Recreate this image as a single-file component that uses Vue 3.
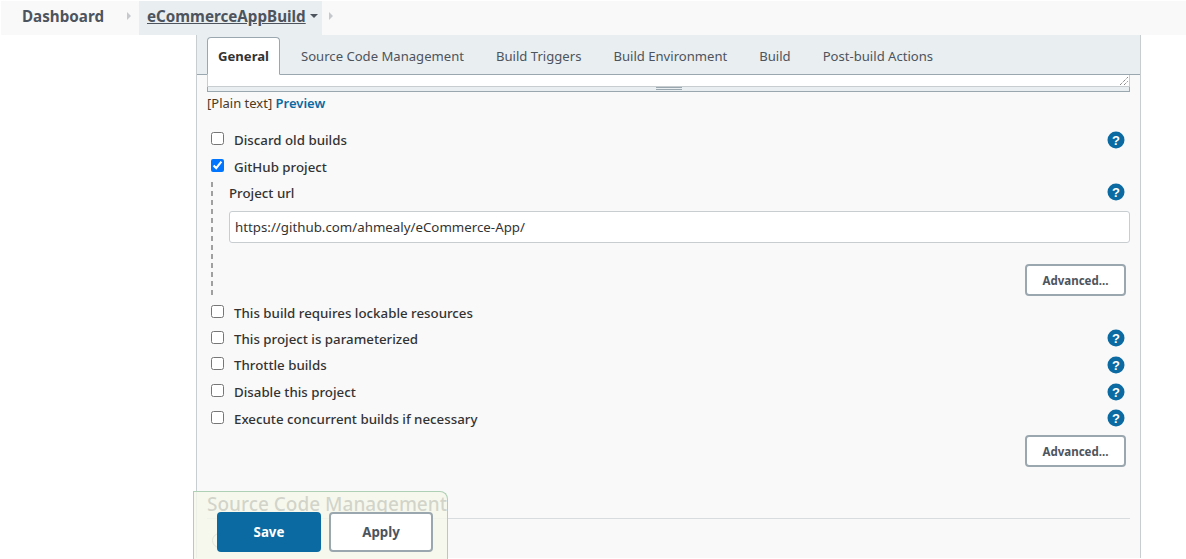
<template>
  <div class="page">
    <nav class="crumbs">
      <a class="crumb">Dashboard</a>
      <span class="sep"></span>
      <a class="crumb current">eCommerceAppBuild<span class="caret"></span></a>
      <span class="sep second"></span>
    </nav>

    <main class="panel">
      <div class="tabs">
        <span
          v-for="(tab, i) in tabs"
          :key="tab"
          class="tab"
          :class="{ active: i === 0 }"
        >{{ tab }}</span>
      </div>

      <div class="body">
        <div class="textarea-end">
          <svg class="resize" width="10" height="10" viewBox="0 0 10 10">
            <path d="M1 9 9 1M5 9 9 5" stroke="#555" stroke-width="1" stroke-dasharray="1 1" fill="none" />
          </svg>
        </div>
        <div class="grip"><span></span></div>
        <div class="format">[Plain text] <a>Preview</a></div>

        <div class="row first">
          <label class="check"><input type="checkbox" />Discard old builds</label>
          <svg class="help" viewBox="0 0 18 18"><circle cx="9" cy="9" r="8.5" /><text x="9" y="13.5">?</text></svg>
        </div>
        <div class="row">
          <label class="check"><input type="checkbox" checked />GitHub project</label>
        </div>

        <div class="nested">
          <div class="row url-label">
            <span>Project url</span>
            <svg class="help" viewBox="0 0 18 18"><circle cx="9" cy="9" r="8.5" /><text x="9" y="13.5">?</text></svg>
          </div>
          <input class="url" type="text" value="https://github.com/ahmealy/eCommerce-App/" />
          <div class="adv-row"><button class="btn adv">Advanced...</button></div>
        </div>

        <div class="row lock">
          <label class="check"><input type="checkbox" />This build requires lockable resources</label>
        </div>
        <div v-for="item in options" :key="item" class="row">
          <label class="check"><input type="checkbox" />{{ item }}</label>
          <svg class="help" viewBox="0 0 18 18"><circle cx="9" cy="9" r="8.5" /><text x="9" y="13.5">?</text></svg>
        </div>
        <div class="adv-row second-adv"><button class="btn adv">Advanced...</button></div>

        <h2 class="section">Source Code Management</h2>
        <div class="radio"></div>
      </div>
    </main>

    <div class="bottom-bar">
      <button class="btn save">Save</button>
      <button class="btn apply">Apply</button>
    </div>
  </div>
</template>

<script setup>
const tabs = [
  'General',
  'Source Code Management',
  'Build Triggers',
  'Build Environment',
  'Build',
  'Post-build Actions'
]

const options = [
  'This project is parameterized',
  'Throttle builds',
  'Disable this project',
  'Execute concurrent builds if necessary'
]
</script>

<style>
html, body { background: #fff; overflow: hidden; }
</style>

<style scoped>
.page {
  position: relative;
  height: 559px;
  overflow: hidden;
  font-family: "Noto Sans", "Open Sans", sans-serif;
  font-size: 13.3px;
  color: #333;
}

.crumbs {
  display: flex;
  align-items: stretch;
  height: 34px;
  margin-top: 1px;
  margin-left: 1px;
  background: #f9f9f9;
  font-weight: 700;
  font-size: 15.2px;
  color: #4d545d;
}
.crumb {
  display: flex;
  align-items: center;
  padding: 0 0 4px 21px;
  box-sizing: border-box;
}
.sep {
  align-self: center;
  width: 0;
  height: 0;
  margin: 0 8px 4px 23px;
  border-left: 4px solid #c5c9cc;
  border-top: 4px solid transparent;
  border-bottom: 4px solid transparent;
}
.current {
  padding: 0 4px 4px 8px;
  background: #e9eef1;
  text-decoration: underline;
}
.caret {
  width: 0;
  height: 0;
  margin-left: 4px;
  border-top: 4px solid #4d545d;
  border-left: 4px solid transparent;
  border-right: 4px solid transparent;
}
.second { margin-left: 7px; }

.panel {
  width: 945px;
  height: 523px;
  margin-left: 196px;
  box-sizing: border-box;
  border-left: 1px solid #c8cdd0;
  border-right: 1px solid #c8cdd0;
  background: #f9f9f9;
}

.tabs {
  display: flex;
  align-items: flex-end;
  height: 40px;
  box-sizing: border-box;
  padding-left: 10px;
  background: #e9eef1;
  border-bottom: 1px solid #9ba7af;
}
.tab {
  height: 37px;
  line-height: 38px;
  padding: 0 16px;
  color: #4d545d;
  font-size: 13.1px;
  white-space: nowrap;
}
.tab.active {
  box-sizing: border-box;
  width: 73px;
  padding: 0;
  margin-right: 5px;
  text-align: center;
  margin-bottom: -1px;
  height: 38px;
  line-height: 37px;
  background: #fff;
  border: 1px solid #9ba7af;
  border-bottom-color: #fff;
  border-radius: 4px 4px 0 0;
  font-weight: 700;
  color: #333;
}

.body { padding: 0 10px; }

.textarea-end {
  display: flex;
  justify-content: flex-end;
  align-items: flex-end;
  height: 12px;
  background: #fff;
  border: 1px solid #c8cdd0;
  border-top: 0;
  box-sizing: border-box;
}
.grip {
  display: flex;
  justify-content: center;
  height: 5px;
  box-sizing: border-box;
  background: #e9eef1;
  border: 1px solid #9ba7af;
  border-top: 0;
}
.grip span {
  width: 26px;
  height: 3px;
  border-top: 1px solid #9ba7af;
  border-bottom: 1px solid #9ba7af;
  box-sizing: border-box;
}
.format {
  height: 24px;
  line-height: 22px;
  font-size: 13px;
  color: #4d3a20;
}
.format a { color: #0b6aa2; font-weight: 600; }

.row {
  display: flex;
  align-items: center;
  justify-content: space-between;
  height: 26.6px;
  padding-right: 5px;
}
.row.first { margin-top: 11px; }
.check {
  display: flex;
  align-items: center;
  padding-left: 4px;
  font-weight: 500;
}
.check input {
  width: 13px;
  height: 13px;
  margin: 0 10px 3px 0;
  accent-color: #0075ff;
}
.help { width: 18px; height: 18px; flex: none; margin-bottom: 1px; }
.help circle { fill: #0b6aa2; }
.help text {
  fill: #fff;
  font-size: 13px;
  font-weight: 700;
  text-anchor: middle;
  font-family: "Liberation Sans", sans-serif;
}

.nested {
  margin: 1.5px 0 0 4px;
  padding-left: 18px;
  height: 114.3px;
  background-image: linear-gradient(#a0a0a0 60%, transparent 60%);
  background-size: 2px 9px;
  background-repeat: repeat-y;
}
.url-label { height: 23px; font-weight: 500; }
.url-label .help { margin-bottom: 2px; }
.url {
  display: block;
  width: 100%;
  height: 32px;
  box-sizing: border-box;
  margin-top: 6.3px;
  padding: 0 5px;
  border: 1px solid #c8cdd0;
  border-radius: 3px;
  background: #fff;
  color: #333;
  font: inherit;
}
.adv-row {
  display: flex;
  justify-content: flex-end;
  margin-top: 21px;
  padding-right: 4px;
}
.row.lock { margin-top: 4px; height: 25.6px; }
.second-adv { margin-top: 3px; }

.btn {
  box-sizing: border-box;
  border-radius: 4px;
  font-family: inherit;
  font-weight: 700;
}
.adv {
  width: 101px;
  height: 32px;
  padding: 2px 0 0;
  background: #fff;
  border: 2px solid #9ba7af;
  color: #4d545d;
  font-size: 11.5px;
}

.section {
  margin: 25px 0 0;
  height: 26px;
  line-height: 24px;
  border-bottom: 1px solid #d9dcde;
  font-size: 19px;
  font-weight: 500;
  color: #333;
}
.radio {
  width: 13px;
  height: 13px;
  margin: 14px 0 0 5px;
  border: 1px solid #888;
  border-radius: 50%;
}

.bottom-bar {
  position: absolute;
  left: 193px;
  top: 491px;
  width: 255px;
  height: 68px;
  box-sizing: border-box;
  padding: 20px 0 0 23px;
  display: flex;
  align-items: flex-start;
  gap: 8px;
  background: rgba(245, 248, 236, 0.82);
  border: 1px solid #aed0b4;
  border-bottom: 0;
  border-radius: 0 8px 0 0;
}
.save {
  width: 104px;
  height: 40px;
  background: #0b6aa2;
  border: 0;
  color: #fff;
  font-size: 13.3px;
}
.apply {
  width: 104px;
  height: 40px;
  background: #fff;
  border: 2px solid #9ba7af;
  color: #4d545d;
  font-size: 13.3px;
}
</style>
